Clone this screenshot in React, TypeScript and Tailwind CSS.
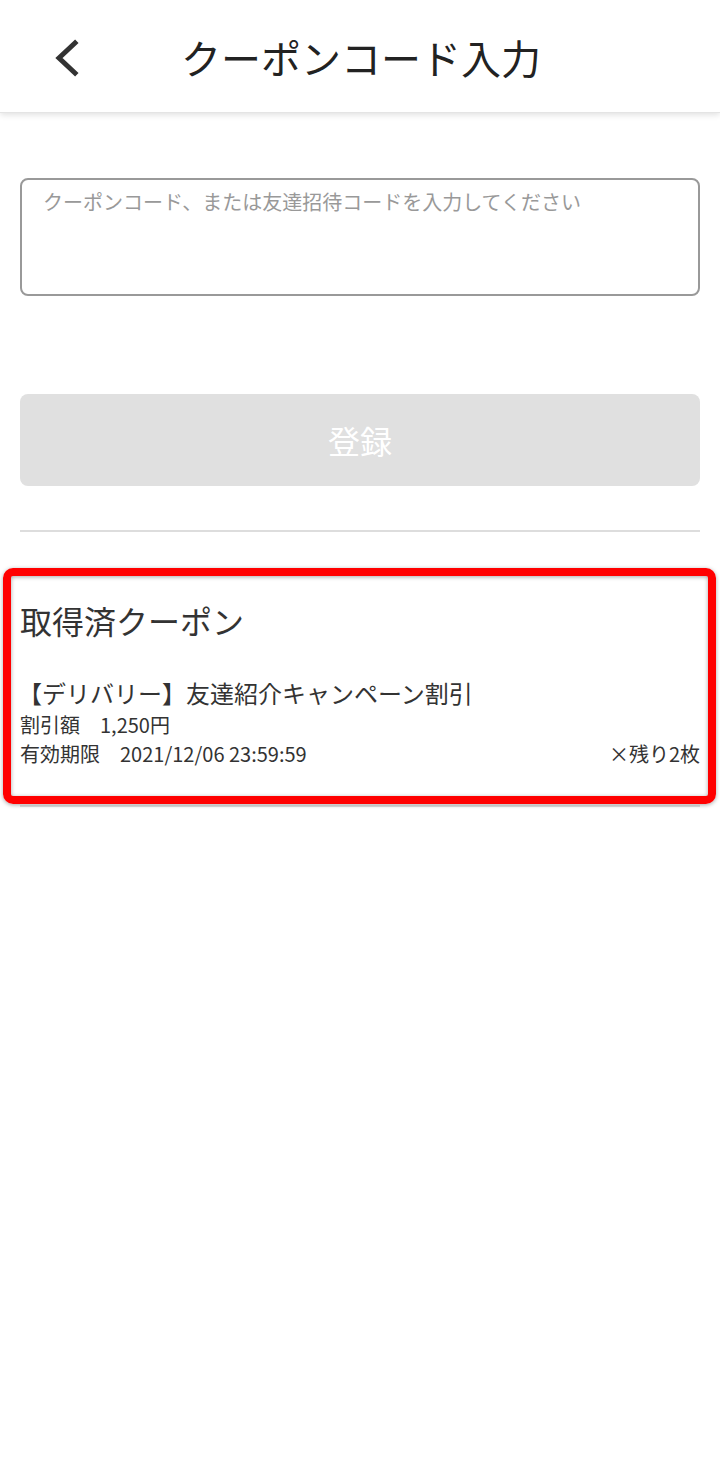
import React from "react";

export default function App() {
  const font = { fontFamily: '"Noto Sans CJK JP", "Noto Sans", sans-serif' };
  return (
    <div className="relative w-[720px] min-h-[1459px] bg-white text-[#333]" style={font}>
      <header className="relative h-[113px] flex items-center justify-center shadow-[0_2px_6px_rgba(0,0,0,0.12)] border-b border-[#e4e4e4]">
        <svg className="absolute left-[52px] top-[39px]" width="28" height="38" viewBox="0 0 28 38">
          <path d="M23 4 L7 19 L23 34" fill="none" stroke="#333" strokeWidth="5" strokeLinecap="square" strokeLinejoin="miter" />
        </svg>
        <h1 className="text-[40px] leading-[56px] text-[#222] ml-[2px] mt-[2px]">クーポンコード入力</h1>
      </header>
      <main className="px-[20px]">
        <div className="mt-[65px] h-[118px] border-2 border-[#999] rounded-[8px] px-[21px] pt-[6px]">
          <p className="text-[20px] leading-[32px] text-[#999]">クーポンコード、または友達招待コードを入力してください</p>
        </div>
        <button className="mt-[98px] w-full h-[92px] rounded-[8px] bg-[#e0e0e0] text-white text-[32px] flex items-center justify-center">
          登録
        </button>
        <div className="mt-[44px] h-[2px] bg-[#ddd]" />
        <h2 className="mt-[64px] text-[32px] leading-[48px] text-[#333]">取得済クーポン</h2>
        <div className="mt-[32px] pb-[37px] border-b-2 border-[#e2e2e2]">
          <p className="text-[24px] leading-[34px] text-[#333] -ml-[2px]">【デリバリー】友達紹介キャンペーン割引</p>
          <p className="text-[20px] leading-[29px]">割引額　1,250円</p>
          <div className="flex justify-between text-[20px] leading-[29px]">
            <span>有効期限　2021/12/06 23:59:59</span>
            <span>×残り2枚</span>
          </div>
        </div>
      </main>
      <div className="absolute left-[3px] top-[568px] w-[713px] h-[236px] border-[8px] border-[#ff0000] rounded-[10px] shadow-[0_1px_4px_rgba(0,0,0,0.35),inset_0_1px_4px_rgba(0,0,0,0.35)] pointer-events-none" />
    </div>
  );
}
